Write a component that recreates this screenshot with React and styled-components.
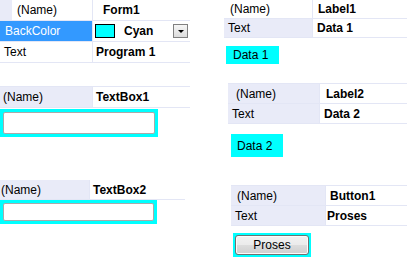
import React from "react";
import styled, { createGlobalStyle } from "styled-components";

const GlobalStyle = createGlobalStyle`
  html, body { margin: 0; padding: 0; background: #ffffff; }
  body { font-family: "Liberation Sans", Arial, sans-serif; font-size: 12px; color: #000; }
`;

const LAV = "#e9ebf8";
const LINE = "#e3e6f5";

const Page = styled.div`
  display: flex;
  width: 407px;
  height: 259px;
  overflow: hidden;
`;

const Column = styled.div`
  display: flex;
  flex-direction: column;
  align-items: flex-start;
  width: ${(p) => p.$width}px;
  flex: none;
`;

const Table = styled.div`
  display: grid;
  grid-template-columns: ${(p) => p.$split}px 1fr;
  grid-auto-rows: ${(p) => p.$rowH}px;
  row-gap: 1px;
  width: ${(p) => p.$width}px;
  margin-top: ${(p) => p.$top || 0}px;
  margin-left: ${(p) => p.$left || 0}px;
  background: ${LINE};
  border-bottom: 1px solid ${LINE};
  border-top: ${(p) => (p.$topLine ? `1px solid ${LINE}` : "none")};
`;

const NameCell = styled.div`
  display: flex;
  align-items: center;
  padding-left: ${(p) => p.$pad || 4}px;
  border-right: 1px solid ${LINE};
  white-space: nowrap;
  color: ${(p) => (p.$tone === "sel" ? "#ffffff" : "#000")};
  background: ${(p) =>
    p.$tone === "sel"
      ? "#3399ff"
      : p.$tone === "lav"
      ? LAV
      : p.$strip
      ? `linear-gradient(to right, ${LAV} 0 ${p.$strip}px, #ffffff ${p.$strip}px)`
      : "#ffffff"};
`;

const ValueCell = styled.div`
  display: flex;
  align-items: center;
  gap: 9px;
  padding-left: ${(p) => p.$pad || 4}px;
  padding-right: 2px;
  font-weight: bold;
  white-space: nowrap;
  background: #ffffff;
`;

const Swatch = styled.span`
  width: 18px;
  height: 12px;
  background: #00ffff;
  border: 1px solid #000;
  flex: none;
`;

const ValueText = styled.span`
  flex: 1;
`;

const DropButton = styled.span`
  width: 15px;
  height: 14px;
  flex: none;
  display: flex;
  align-items: center;
  justify-content: center;
  border: 1px solid #808080;
  background: linear-gradient(#f6f6f6, #dcdcdc);
  box-sizing: border-box;
`;

const CyanLabel = styled.div`
  display: flex;
  align-items: center;
  width: ${(p) => p.$w}px;
  height: ${(p) => p.$h}px;
  margin-top: ${(p) => p.$top}px;
  margin-left: ${(p) => p.$left}px;
  padding-left: ${(p) => p.$pad}px;
  box-sizing: border-box;
  background: #00ffff;
`;

const CyanFrame = styled.div`
  display: flex;
  width: ${(p) => p.$w}px;
  height: ${(p) => p.$h}px;
  margin-top: ${(p) => p.$top}px;
  margin-left: ${(p) => p.$left || 0}px;
  padding: ${(p) => p.$pad || 3}px;
  box-sizing: border-box;
  background: #00ffff;
`;

const Input = styled.div`
  flex: 1;
  background: #ffffff;
  border: 1px solid #a9a9a9;
  border-radius: 2px;
`;

const PushButton = styled.div`
  flex: 1;
  display: flex;
  align-items: center;
  justify-content: center;
  border: 1px solid #707070;
  border-radius: 3px;
  background: linear-gradient(#f2f2f2 0%, #ebebeb 50%, #dddddd 51%, #cfcfcf 100%);
  box-shadow: inset 0 0 0 1px #fcfcfc;
  font-size: 12px;
`;

const Arrow = () => (
  <svg width="8" height="5" viewBox="0 0 8 5">
    <path d="M1 1h6L4 4z" fill="#000" />
  </svg>
);

export default function App() {
  return (
    <>
      <GlobalStyle />
      <Page>
        <Column $width={224}>
          <Table $split={93} $width={190} $rowH={20}>
            <NameCell $strip={12} $pad={17}>(Name)</NameCell>
            <ValueCell $pad={10}>Form1</ValueCell>
            <NameCell $tone="sel" $pad={5}>BackColor</NameCell>
            <ValueCell $pad={2}>
              <Swatch />
              <ValueText>Cyan</ValueText>
              <DropButton>
                <Arrow />
              </DropButton>
            </ValueCell>
            <NameCell $pad={4}>Text</NameCell>
            <ValueCell $pad={3}>Program 1</ValueCell>
          </Table>

          <Table $split={93} $width={190} $rowH={20} $top={23} $topLine>
            <NameCell $tone="lav" $pad={3}>(Name)</NameCell>
            <ValueCell $pad={3}>TextBox1</ValueCell>
          </Table>
          <CyanFrame $w={158} $h={28} $top={1}>
            <Input />
          </CyanFrame>

          <Table $split={90} $width={185} $rowH={19} $top={43}>
            <NameCell $tone="lav" $pad={1}>(Name)</NameCell>
            <ValueCell $pad={3}>TextBox2</ValueCell>
          </Table>
          <CyanFrame $w={157} $h={24} $top={0}>
            <Input />
          </CyanFrame>
        </Column>

        <Column $width={183}>
          <Table $split={89} $width={183} $rowH={18}>
            <NameCell $pad={6}>(Name)</NameCell>
            <ValueCell $pad={5}>Label1</ValueCell>
            <NameCell $tone="lav" $pad={4}>Text</NameCell>
            <ValueCell $pad={4}>Data 1</ValueCell>
          </Table>
          <CyanLabel $w={53} $h={18} $top={8} $left={2} $pad={7}>
            Data 1
          </CyanLabel>

          <Table $split={92} $width={179} $rowH={19} $top={19} $left={4} $topLine>
            <NameCell $tone="lav" $pad={8}>(Name)</NameCell>
            <ValueCell $pad={6}>Label2</ValueCell>
            <NameCell $tone="lav" $pad={4}>Text</NameCell>
            <ValueCell $pad={4}>Data 2</ValueCell>
          </Table>
          <CyanLabel $w={52} $h={23} $top={10} $left={7} $pad={6}>
            Data 2
          </CyanLabel>

          <Table $split={95} $width={176} $rowH={19} $top={28} $left={7} $topLine>
            <NameCell $tone="lav" $pad={6}>(Name)</NameCell>
            <ValueCell $pad={4}>Button1</ValueCell>
            <NameCell $tone="lav" $pad={4}>Text</NameCell>
            <ValueCell $pad={1}>Proses</ValueCell>
          </Table>
          <CyanFrame $w={78} $h={24} $top={7} $left={9} $pad={2}>
            <PushButton>Proses</PushButton>
          </CyanFrame>
        </Column>
      </Page>
    </>
  );
}
